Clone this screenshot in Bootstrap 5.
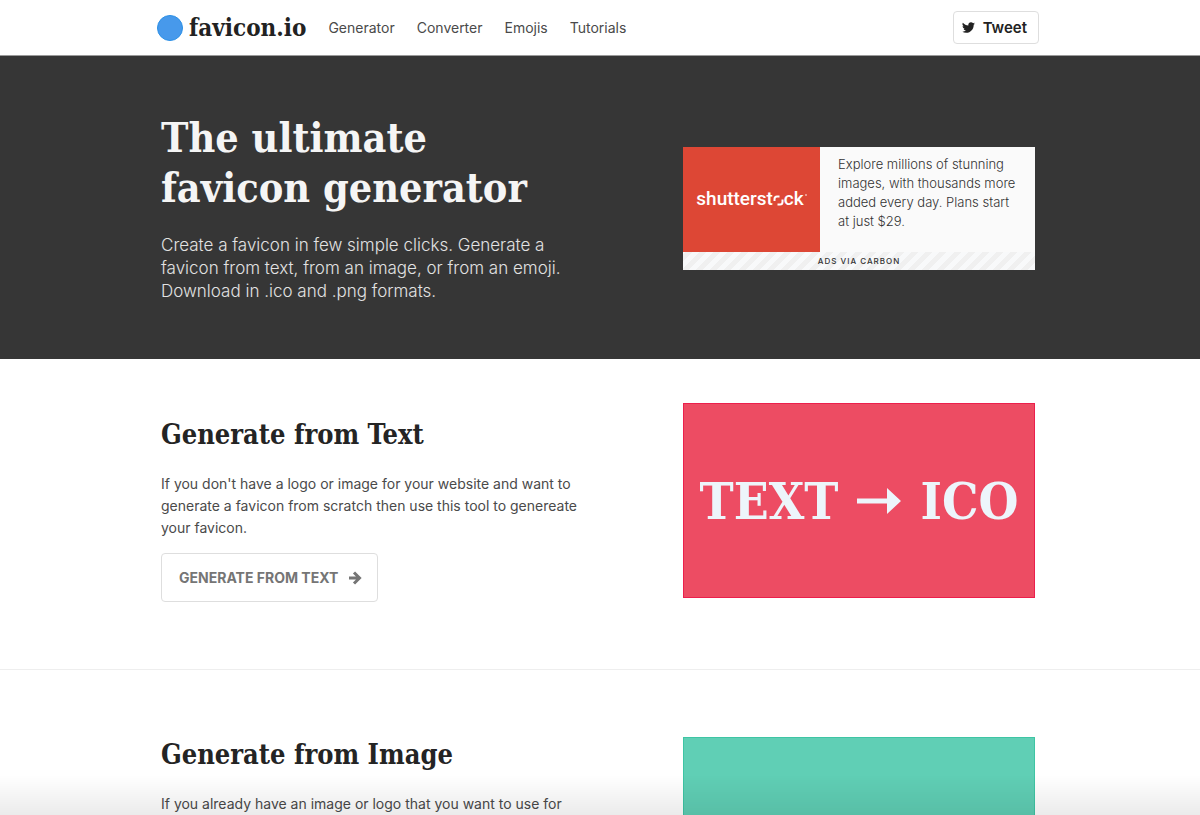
<!DOCTYPE html>
<html lang="en">
<head>
<meta charset="utf-8">
<meta name="viewport" content="width=device-width, initial-scale=1">
<title>favicon.io</title>
<link href="https://cdn.jsdelivr.net/npm/bootstrap@5.3.0/dist/css/bootstrap.min.css" rel="stylesheet">
<style>
  body { font-family: Inter, "Liberation Sans", sans-serif; font-size: 14px; line-height: 22px; color: #4a4a4a; background: #fff; }
  .slab { font-family: "Roboto Slab", "DejaVu Serif Condensed", "DejaVu Serif", serif; font-weight: 700; }
  .nav-wrap { max-width: 882px; }
  .page-wrap { max-width: 874px; }
  .site-nav { height: 56px; border-bottom: 1px solid #9a9a9a; }
  .dot { width: 26px; height: 26px; background: #4799eb; border: 1px solid #2a8fe6; }
  .brand { gap: 6px; margin-right: 22px; }
  .brand-name { font-size: 24px; line-height: 32px; color: #222; }
  .menu { gap: 22px; }
  .menu .nav-link { font-size: 14px; color: #4a4a4a; padding: 0; }
  .outline-btn { background: #fff; border: 1px solid #dedede; border-radius: 4px; }
  .tweet { height: 33px; font-size: 15px; font-weight: 600; color: #222; padding: 0 11px 0 8px; }
  .hero { background: #363636; padding: 57px 0 56px; }
  .hero h1 { font-size: 41px; line-height: 50px; color: #f5f5f5; margin-bottom: 21px; }
  .hero p { font-size: 17px; line-height: 23px; font-weight: 300; color: #e2e2e2; }
  .copy { flex: 0 1 420px; }
  .side { flex: 0 1 352px; }
  .ad { background: #fafafa; }
  .ad-logo { width: 137px; height: 105px; background: #dd4735; color: #fff; font: 500 19px/24px Roboto, sans-serif; }
  .ad-copy { padding: 8px 12px 0 18px; font-size: 13px; line-height: 19px; font-weight: 300; color: #333; }
  .ad-foot { height: 18px; font-size: 8px; font-weight: 500; letter-spacing: 1px; line-height: 18px; color: #333;
    background: repeating-linear-gradient(-45deg, #f8f9fa 0 5px, #f0f0f0 5px 10px); }
  .feature h2 { font-size: 27px; line-height: 36px; color: #242424; margin-bottom: 20px; }
  .feature p { margin-bottom: 14px; }
  .feature-text { padding-top: 44px; padding-bottom: 67px; border-bottom: 1px solid #eee; }
  .feature-text h2 { margin-top: 14px; }
  .feature-image { padding-top: 67px; }
  .go { height: 49px; padding: 0 15px 0 17px; font-size: 14px; font-weight: 700; color: #757575; gap: 10px; }
  .tile { height: 195px; font-size: 51px; gap: 19px; color: #edf5fb; }
  .tile-red { background: #ed4c63; border: 1px solid #ec1f4c; }
  .tile-green { background: #60cfb5; border: 1px solid #3ec5a4; }
  .fade-edge { height: 40px; background: linear-gradient(transparent, rgba(0,0,0,.08)); pointer-events: none; }
</style>
</head>
<body>
<header class="site-nav pe-1">
  <nav class="nav-wrap mx-auto h-100 d-flex align-items-center justify-content-between">
    <div class="d-flex align-items-center">
      <a href="#" class="brand d-flex align-items-center text-decoration-none"><span class="dot rounded-circle"></span><span class="slab brand-name">favicon.io</span></a>
      <div class="nav menu">
        <a class="nav-link" href="#">Generator</a>
        <a class="nav-link" href="#">Converter</a>
        <a class="nav-link" href="#">Emojis</a>
        <a class="nav-link" href="#">Tutorials</a>
      </div>
    </div>
    <button class="outline-btn tweet d-flex align-items-center gap-2" type="button">
      <svg width="13" height="13" viewBox="0 0 24 24" fill="#222" aria-hidden="true"><path d="M23.95 4.57a10 10 0 0 1-2.82.77 4.96 4.96 0 0 0 2.16-2.72c-.95.55-2 .95-3.13 1.18a4.92 4.92 0 0 0-8.38 4.48C7.69 8.1 4.07 6.13 1.64 3.16a4.9 4.9 0 0 0 1.52 6.57 4.9 4.9 0 0 1-2.23-.61v.06a4.92 4.92 0 0 0 3.95 4.83 5 5 0 0 1-2.21.08 4.94 4.94 0 0 0 4.6 3.42A9.87 9.87 0 0 1 0 19.54a14 14 0 0 0 7.55 2.21c9.05 0 14-7.5 14-13.98 0-.21 0-.42-.02-.63a9.94 9.94 0 0 0 2.46-2.55z"/></svg>
      Tweet
    </button>
  </nav>
</header>
<main>
  <section class="hero pe-1">
    <div class="page-wrap mx-auto d-flex align-items-center justify-content-between">
      <div class="copy">
        <h1 class="slab">The ultimate<br>favicon generator</h1>
        <p class="m-0">Create a favicon in few simple clicks. Generate a<br>favicon from text, from an image, or from an emoji.<br>Download in .ico and .png formats.</p>
      </div>
      <aside class="side ad">
        <div class="d-flex">
          <div class="ad-logo d-flex align-items-center justify-content-center flex-shrink-0"><span>shutterst</span><svg width="11" height="14" viewBox="0 0 11 14" fill="none" stroke="#fff" stroke-width="2" aria-hidden="true"><path d="M1.500 9V7Q1.500 4.500 4 4.500H6.500M9.500 7.500V10Q9.500 12.500 7 12.500H4.500"/></svg><span>ck</span><svg width="3" height="14" viewBox="0 0 3 14" fill="#fff" aria-hidden="true"><circle cx="2" cy="3" r="0.8"/></svg></div>
          <div class="ad-copy">Explore millions of stunning<br>images, with thousands more<br>added every day. Plans start<br>at just $29.</div>
        </div>
        <div class="ad-foot text-center">ADS VIA CARBON</div>
      </aside>
    </div>
  </section>
  <section class="feature feature-text pe-1">
    <div class="page-wrap mx-auto d-flex align-items-start justify-content-between">
      <div class="copy">
        <h2 class="slab">Generate from Text</h2>
        <p>If you don't have a logo or image for your website and want to<br>generate a favicon from scratch then use this tool to genereate<br>your favicon.</p>
        <button class="outline-btn go d-flex align-items-center" type="button">GENERATE FROM TEXT
          <svg width="14" height="14" viewBox="0 0 14 14" fill="none" stroke="#757575" stroke-width="3" aria-hidden="true"><path d="M1 7h10M6 1.500 11.500 7 6 12.500"/></svg></button>
      </div>
      <div class="side tile tile-red slab d-flex align-items-center justify-content-center">
        <span>TEXT</span>
        <svg width="44" height="26" viewBox="0 0 44 26" fill="#edf5fb" aria-hidden="true"><path d="M0 10.500h30V0l14 13-14 13V15.500H0z"/></svg>
        <span>ICO</span>
      </div>
    </div>
  </section>
  <section class="feature feature-image pe-1">
    <div class="page-wrap mx-auto d-flex align-items-start justify-content-between">
      <div class="copy">
        <h2 class="slab">Generate from Image</h2>
        <p>If you already have an image or logo that you want to use for</p>
      </div>
      <div class="side tile tile-green"></div>
    </div>
  </section>
</main>
<div class="fade-edge fixed-bottom"></div>
<script src="https://cdn.jsdelivr.net/npm/bootstrap@5.3.0/dist/js/bootstrap.bundle.min.js"></script>
</body>
</html>
